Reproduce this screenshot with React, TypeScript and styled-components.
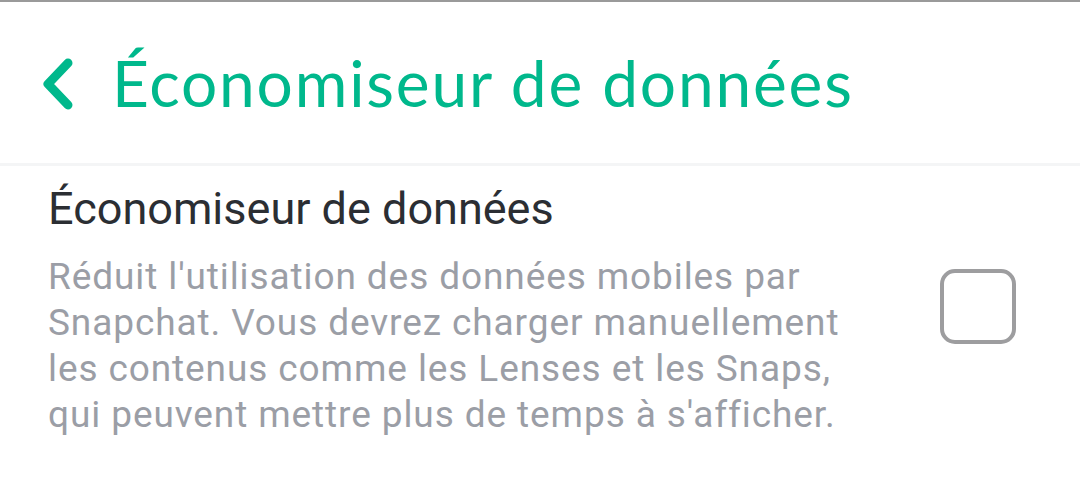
import styled, { createGlobalStyle } from "styled-components";

const GlobalStyle = createGlobalStyle`
  html, body {
    margin: 0;
    padding: 0;
    background: #ffffff;
  }
  * {
    box-sizing: border-box;
  }
`;

const Page = styled.div`
  width: 1080px;
  height: 501px;
  overflow: hidden;
  background: #ffffff;
  border-top: 2px solid #9a9a9a;
`;

const Header = styled.header`
  height: 164px;
  display: flex;
  align-items: center;
  gap: 38px;
  padding-left: 42px;
  border-bottom: 3px solid #f4f5f6;
`;

const BackButton = styled.button`
  display: flex;
  align-items: center;
  justify-content: center;
  width: 32px;
  height: 52px;
  padding: 0;
  margin-top: 2px;
  border: none;
  background: none;
  cursor: pointer;
`;

const Title = styled.h1`
  margin: 0;
  font-family: "Lato", "Noto Sans", sans-serif;
  font-weight: 400;
  font-size: 64px;
  letter-spacing: 1.8px;
  color: #00b88c;
`;

const Content = styled.section`
  display: flex;
  align-items: center;
  justify-content: space-between;
  padding: 16px 64px 0 48px;
`;

const TextColumn = styled.div`
  flex: 0 1 830px;
  font-family: "Roboto", "Liberation Sans", sans-serif;
`;

const Label = styled.h2`
  margin: 0 0 18px;
  font-size: 45px;
  font-weight: 400;
  line-height: 54px;
  color: #2b2e33;
`;

const Description = styled.p`
  margin: 0;
  font-size: 37px;
  letter-spacing: 0.9px;
  line-height: 46px;
  color: #9b9ea6;
`;

const Checkbox = styled.button`
  width: 76px;
  height: 75px;
  flex-shrink: 0;
  padding: 0;
  margin-bottom: 8px;
  border: 4px solid #9d9d9f;
  border-radius: 15px;
  background: #ffffff;
  cursor: pointer;
`;

function App() {
  return (
    <Page>
      <GlobalStyle />
      <Header>
        <BackButton aria-label="Retour">
          <svg width="32" height="52" viewBox="0 0 32 52" fill="none">
            <path
              d="M26 5 L6 26 L26 47"
              stroke="#00b88c"
              strokeWidth="9"
              strokeLinecap="round"
              strokeLinejoin="round"
            />
          </svg>
        </BackButton>
        <Title>Économiseur de données</Title>
      </Header>
      <Content>
        <TextColumn>
          <Label>Économiseur de données</Label>
          <Description>
            Réduit l'utilisation des données mobiles par Snapchat. Vous devrez
            charger manuellement les contenus comme les Lenses et les Snaps, qui
            peuvent mettre plus de temps à s'afficher.
          </Description>
        </TextColumn>
        <Checkbox aria-label="Économiseur de données" />
      </Content>
    </Page>
  );
}

export default App;
